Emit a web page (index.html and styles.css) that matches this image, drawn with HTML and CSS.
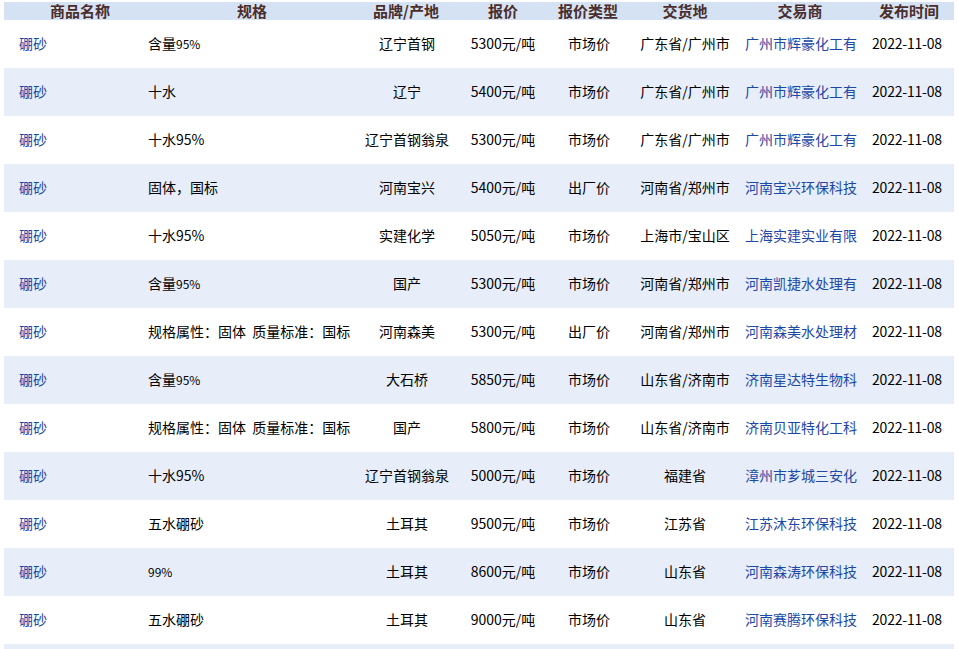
FILE: index.html
```html
<!DOCTYPE html>
<html lang="zh">
<head>
<meta charset="utf-8">
<link rel="stylesheet" href="styles.css">
</head>
<body>
<div class="list">
  <div class="head">
    <div>商品名称</div><div>规格</div><div>品牌/产地</div><div>报价</div><div>报价类型</div><div>交货地</div><div>交易商</div><div>发布时间</div>
  </div>
  <div class="row"><a class="name">硼砂</a><div class="spec">含量<span class="sm">95%</span></div><div>辽宁首钢</div><div>5300元/吨</div><div>市场价</div><div>广东省/广州市</div><a class="trader">广州市辉豪化工有</a><div class="date">2022-11-08</div></div>
  <div class="row alt"><a class="name">硼砂</a><div class="spec">十水</div><div>辽宁</div><div>5400元/吨</div><div>市场价</div><div>广东省/广州市</div><a class="trader">广州市辉豪化工有</a><div class="date">2022-11-08</div></div>
  <div class="row"><a class="name">硼砂</a><div class="spec">十水95%</div><div>辽宁首钢翁泉</div><div>5300元/吨</div><div>市场价</div><div>广东省/广州市</div><a class="trader">广州市辉豪化工有</a><div class="date">2022-11-08</div></div>
  <div class="row alt"><a class="name">硼砂</a><div class="spec">固体，国标</div><div>河南宝兴</div><div>5400元/吨</div><div>出厂价</div><div>河南省/郑州市</div><a class="trader">河南宝兴环保科技</a><div class="date">2022-11-08</div></div>
  <div class="row"><a class="name">硼砂</a><div class="spec">十水95%</div><div>实建化学</div><div>5050元/吨</div><div>市场价</div><div>上海市/宝山区</div><a class="trader">上海实建实业有限</a><div class="date">2022-11-08</div></div>
  <div class="row alt"><a class="name">硼砂</a><div class="spec">含量<span class="sm">95%</span></div><div>国产</div><div>5300元/吨</div><div>市场价</div><div>河南省/郑州市</div><a class="trader">河南凯捷水处理有</a><div class="date">2022-11-08</div></div>
  <div class="row"><a class="name">硼砂</a><div class="spec">规格属性：固体&nbsp;&nbsp;质量标准：国标</div><div>河南森美</div><div>5300元/吨</div><div>出厂价</div><div>河南省/郑州市</div><a class="trader">河南森美水处理材</a><div class="date">2022-11-08</div></div>
  <div class="row alt"><a class="name">硼砂</a><div class="spec">含量<span class="sm">95%</span></div><div>大石桥</div><div>5850元/吨</div><div>市场价</div><div>山东省/济南市</div><a class="trader">济南星达特生物科</a><div class="date">2022-11-08</div></div>
  <div class="row"><a class="name">硼砂</a><div class="spec">规格属性：固体&nbsp;&nbsp;质量标准：国标</div><div>国产</div><div>5800元/吨</div><div>市场价</div><div>山东省/济南市</div><a class="trader">济南贝亚特化工科</a><div class="date">2022-11-08</div></div>
  <div class="row alt"><a class="name">硼砂</a><div class="spec">十水95%</div><div>辽宁首钢翁泉</div><div>5000元/吨</div><div>市场价</div><div>福建省</div><a class="trader">漳州市芗城三安化</a><div class="date">2022-11-08</div></div>
  <div class="row"><a class="name">硼砂</a><div class="spec">五水硼砂</div><div>土耳其</div><div>9500元/吨</div><div>市场价</div><div>江苏省</div><a class="trader">江苏沐东环保科技</a><div class="date">2022-11-08</div></div>
  <div class="row alt"><a class="name">硼砂</a><div class="spec"><span class="sm">99%</span></div><div>土耳其</div><div>8600元/吨</div><div>市场价</div><div>山东省</div><a class="trader">河南森涛环保科技</a><div class="date">2022-11-08</div></div>
  <div class="row"><a class="name">硼砂</a><div class="spec">五水硼砂</div><div>土耳其</div><div>9000元/吨</div><div>市场价</div><div>山东省</div><a class="trader">河南赛腾环保科技</a><div class="date">2022-11-08</div></div>
  <div class="row alt"></div>
</div>
</body>
</html>
```

FILE: styles.css
```css
html, body {
  margin: 0;
  padding: 0;
  background: #ffffff;
  overflow: hidden;
}
body {
  padding: 2px 4px 0 4px;
  font-family: "Noto Sans CJK SC", "Noto Sans", sans-serif;
  font-size: 14px;
  color: #000000;
}
.list {
  width: 950px;
}
.head {
  display: grid;
  grid-template-columns: 152px 192px 116px 78px 92px 102px 128px 90px;
  height: 18px;
  background: #d4e2f3;
  align-items: center;
  font-weight: bold;
  font-size: 15px;
  color: #4b2d2b;
}
.head > div {
  text-align: center;
  line-height: 18px;
}
.row {
  display: grid;
  grid-template-columns: 136px 218px 98px 94px 78px 114px 118px 94px;
  height: 48px;
  align-items: center;
  background: #ffffff;
}
.row.alt {
  background: #e7eef9;
}
.row > * {
  text-align: center;
  white-space: nowrap;
  overflow: hidden;
  line-height: 20px;
  margin-top: -2px;
}
.row > .name {
  text-align: left;
  padding-left: 15px;
  color: #1d48a6;
}
.row > .spec {
  text-align: left;
  padding-left: 8px;
}
.row > .trader {
  color: #1d48a6;
  text-align: left;
  padding-left: 3px;
}
.row > .date {
  letter-spacing: -0.2px;
}
.sm {
  font-size: 12px;
}
```
